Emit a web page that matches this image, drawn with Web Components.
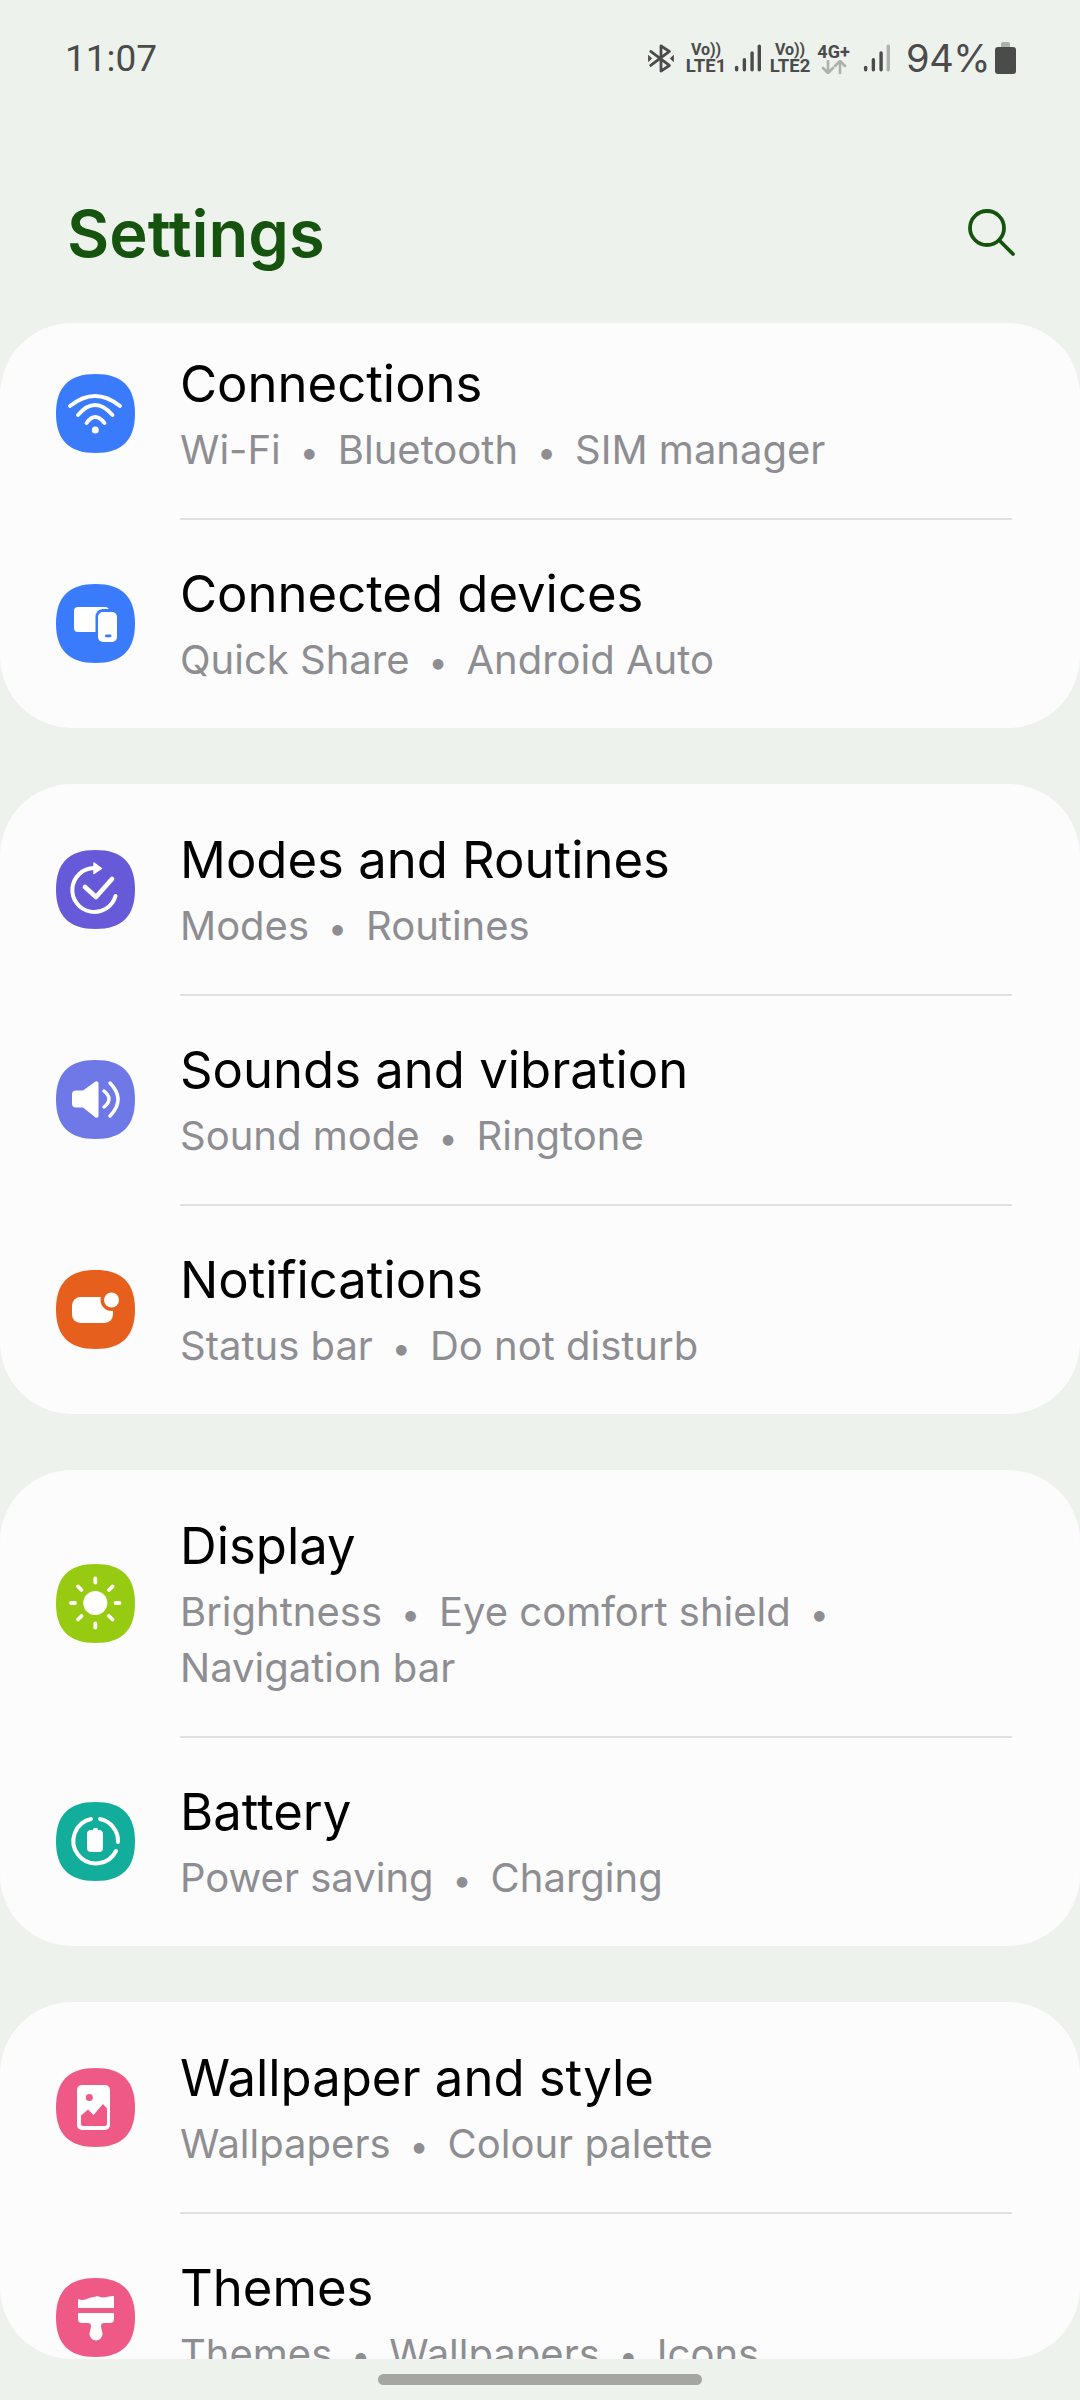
<!DOCTYPE html>
<html>
<head>
<meta charset="utf-8">
<title>Settings</title>
<style>
  html, body { margin: 0; padding: 0; background: #edf2ec; }
  body { width: 1080px; height: 2400px; overflow: hidden; font-family: Inter, Roboto, sans-serif; }
</style>
</head>
<body>
<settings-screen>
  <status-bar></status-bar>
  <settings-header></settings-header>
  <settings-list>
    <settings-card>
      <settings-row clipped label="Connections" sub="Wi-Fi|Bluetooth|SIM manager" icon="wifi" color="#3a7bfb"></settings-row>
      <settings-row label="Connected devices" sub="Quick Share|Android Auto" icon="devices" color="#3a7bfb"></settings-row>
    </settings-card>
    <settings-card>
      <settings-row label="Modes and Routines" sub="Modes|Routines" icon="modes" color="#675ad9"></settings-row>
      <settings-row label="Sounds and vibration" sub="Sound mode|Ringtone" icon="sound" color="#6e78e6"></settings-row>
      <settings-row label="Notifications" sub="Status bar|Do not disturb" icon="notif" color="#e75f1c"></settings-row>
    </settings-card>
    <settings-card>
      <settings-row label="Display" sub="Brightness|Eye comfort shield|Navigation bar" icon="display" color="#97cb12"></settings-row>
      <settings-row label="Battery" sub="Power saving|Charging" icon="battery" color="#13ad9c"></settings-row>
    </settings-card>
    <settings-card>
      <settings-row label="Wallpaper and style" sub="Wallpapers|Colour palette" icon="wallpaper" color="#ee5a85"></settings-row>
      <settings-row label="Themes" sub="Themes|Wallpapers|Icons" icon="themes" color="#ee5a85"></settings-row>
    </settings-card>
  </settings-list>
  <nav-pill></nav-pill>
</settings-screen>

<script>
const GLYPHS = {
  wifi: `<g fill="none" stroke="#fff" stroke-width="3.800" stroke-linecap="round">
      <path d="M14 32Q39 12 64 32"/><path d="M22 41Q39 21 56.500 41"/><path d="M30.500 49Q39 37 48.500 49"/></g>
      <circle cx="39.300" cy="56" r="3.500" fill="#fff"/>`,
  devices: `<rect x="18" y="23" width="35" height="25" rx="4" fill="#fff"/>
      <rect x="39.500" y="25" width="24" height="35.500" rx="7.500" fill="#3a7bfb"/>
      <rect x="42" y="28" width="19" height="30" rx="5" fill="#fff"/>
      <rect x="49" y="50.500" width="6.500" height="2.800" rx="1.400" fill="#3a7bfb"/>`,
  modes: `<g fill="none" stroke="#fff" stroke-linecap="round" stroke-linejoin="round">
      <path d="M38 18A22 22 0 1 0 59.500 46" stroke-width="4"/>
      <path d="M29 37l11 10 16-18" stroke-width="4.600"/></g>
      <path d="M38 13l7.500 5.500L38 23.500z" fill="#fff" stroke="#fff" stroke-width="1.500" stroke-linejoin="round"/>`,
  sound: `<path d="M20 30.500h7L39.500 21.500a2 2 0 0 1 3 1.500V56a2 2 0 0 1-3 1.500L27 47.500h-7a4 4 0 0 1-4-4V34.500a4 4 0 0 1 4-4z" fill="#fff"/>
      <g fill="none" stroke="#fff" stroke-width="3.500" stroke-linecap="round"><path d="M48 31Q58 39 48 47"/><path d="M54 23Q70 39.500 54 56"/></g>`,
  notif: `<rect x="16" y="27" width="41" height="26" rx="8.500" fill="#fff"/>
      <circle cx="55.500" cy="30" r="11" fill="#e75f1c"/>
      <circle cx="55.500" cy="30" r="7.500" fill="#fff"/>`,
  display: `<circle cx="39.300" cy="39" r="12" fill="#fff"/>
      <g stroke="#fff" stroke-width="3.800" stroke-linecap="round">
      <path d="M39.300 14.500v4"/><path d="M39.300 59.500v4"/><path d="M15 39h4"/><path d="M59.500 39h4"/>
      <path d="M22 22.500l3.500 3.500"/><path d="M53 52l3.500 3.500"/><path d="M22 55.500l3.500-3.500"/><path d="M53 26l3.500-3.500"/></g>`,
  battery: `<g fill="none" stroke="#fff" stroke-width="4" stroke-linecap="round">
      <path d="M44 17A22.500 22.500 0 0 1 62 40"/>
      <path d="M60 49A22.500 22.500 0 1 1 35 17"/></g>
      <path d="M37 28v-.5a1.500 1.500 0 0 1 1.500-1.500h2a1.500 1.500 0 0 1 1.500 1.500v.5h1a4 4 0 0 1 4 4v14a4 4 0 0 1-4 4h-8a4 4 0 0 1-4-4V32a4 4 0 0 1 4-4z" fill="#fff"/>`,
  wallpaper: `<rect x="21" y="17" width="33" height="45" rx="5" fill="#fff"/>
      <circle cx="33.300" cy="29.500" r="3.500" fill="#ee5a85"/>
      <path d="M25 47.500l7-6 5.500 5.500L47 36l4 4.500V56a2 2 0 0 1-2 2H27a2 2 0 0 1-2-2z" fill="#ee5a85"/>`,
  themes: `<path d="M22 21c4 1.500 7 1 10-.5 3-1.500 5-1 8-2 3-1 4 1 7 1 3 0 6-1.500 11-1.500v12H22z" fill="#fff"/>
      <path d="M22 35H58v6a4 4 0 0 1-4 4H48a3 3 0 0 0-3 3c0 3 1.500 5 1.500 8a6.500 6.500 0 0 1-13 0c0-3 1.500-5 1.500-8a3 3 0 0 0-3-3H26a4 4 0 0 1-4-4z" fill="#fff"/>`
};

class SettingsScreen extends HTMLElement {
  connectedCallback() {
    this.attachShadow({ mode: 'open' });
    this.shadowRoot.innerHTML = `
      <style>
        :host { display: flex; flex-direction: column; width: 1080px; height: 2400px; position: relative; overflow: hidden; color: #000; }
      </style>
      <slot></slot>
    `;
  }
}

class StatusBar extends HTMLElement {
  connectedCallback() {
    this.attachShadow({ mode: 'open' });
    this.shadowRoot.innerHTML = `
      <style>
        :host { display: flex; align-items: center; justify-content: space-between; height: 32px; padding: 42px 64px 0 65px; color: #4b4b4b; }
        .time { font: 400 37px Roboto, sans-serif; }
        .icons { display: flex; align-items: center; }
        .duo { display: flex; flex-direction: column; align-items: center; font: 700 18.500px/16.500px Roboto, sans-serif; }
        .duo small { font-size: 16px; line-height: 16.500px; display: flex; align-items: center; }
        .pct { font: 400 38px Inter, sans-serif; letter-spacing: -.5px; margin-right: 5px; }
        svg { display: block; }
      </style>
      <span class="time">11:07</span>
      <div class="icons">
        <svg width="28" height="32" viewBox="0 0 30 32" style="margin-right:12px" fill="none" stroke="#4b4b4b" stroke-width="3" stroke-linecap="round" stroke-linejoin="round">
          <path d="M4 9l20 15-9 6V3l9 6L4 24"/>
          <path d="M2 13.500l3 3-3 3zM28 13.500l-3 3 3 3z" fill="#4b4b4b" stroke-width="1"/>
        </svg>
        <div class="duo" style="width:38px;margin-right:9px"><small>Vo))</small>LTE1</div>
        <svg width="27" height="30" viewBox="0 0 28 30" style="margin-right:9px" fill="#4b4b4b">
          <rect x="1" y="23" width="3.500" height="6" rx="1.700"/><rect x="9" y="15" width="3.500" height="14" rx="1.700"/><rect x="17" y="8" width="3.500" height="21" rx="1.700"/><rect x="24.500" y="1" width="3.500" height="28" rx="1.700"/>
        </svg>
        <div class="duo" style="width:40px;margin-right:7px"><small>Vo))</small>LTE2</div>
        <div class="duo" style="width:33px;margin-right:13px">
          <span style="font-size:18px;line-height:17px">4G+</span>
          <svg width="26" height="14" viewBox="0 0 26 14" fill="none" stroke="#adb0ac" stroke-width="2.600" stroke-linecap="round" stroke-linejoin="round">
            <path d="M7 1v12M2 8l5 5 5-5"/><path d="M19 13V1M14 6l5-5 5 5"/>
          </svg>
        </div>
        <svg width="27" height="30" viewBox="0 0 28 30" style="margin-right:16px" fill="#4b4b4b">
          <rect x="1" y="23" width="3.500" height="6" rx="1.700"/><rect x="9" y="15" width="3.500" height="14" rx="1.700"/><rect x="17" y="8" width="3.500" height="21" rx="1.700"/><rect x="24.500" y="1" width="3.500" height="28" rx="1.700" fill="#adb0ac"/>
        </svg>
        <span class="pct">94%</span>
        <svg width="21" height="32" viewBox="0 0 21 32">
          <path d="M6 2a2 2 0 0 1 2-2h5a2 2 0 0 1 2 2v3H6z" fill="#adb0ac"/>
          <rect x="0" y="5" width="21" height="27" rx="3" fill="#4b4b4b"/>
        </svg>
      </div>
    `;
  }
}

class SettingsHeader extends HTMLElement {
  connectedCallback() {
    this.attachShadow({ mode: 'open' });
    this.shadowRoot.innerHTML = `
      <style>
        :host { display: flex; align-items: center; justify-content: space-between; height: 249px; padding: 70px 64px 0 67px; box-sizing: border-box; }
        h1 { margin: 0; font: 600 65px Inter, Roboto, sans-serif; color: #15530f; }
        svg { display: block; margin-top: -4px; }
      </style>
      <h1>Settings</h1>
      <svg width="50" height="50" viewBox="0 0 50 50" fill="none" stroke="#15530f" stroke-width="3.800" stroke-linecap="round">
        <circle cx="21" cy="21" r="17"/><path d="M33.500 33.500l13.500 13.500"/>
      </svg>
    `;
  }
}

class SettingsList extends HTMLElement {
  connectedCallback() {
    this.attachShadow({ mode: 'open' });
    this.shadowRoot.innerHTML = `
      <style>
        :host { display: flex; flex-direction: column; gap: 56px; }
      </style>
      <slot></slot>
    `;
  }
}

class SettingsCard extends HTMLElement {
  connectedCallback() {
    this.attachShadow({ mode: 'open' });
    this.shadowRoot.innerHTML = `
      <style>
        :host { display: block; background: #fcfcfc; border-radius: 72px; overflow: hidden; }
        :host(:last-child) { height: 357px; }
      </style>
      <slot></slot>
    `;
  }
}

class SettingsRow extends HTMLElement {
  connectedCallback() {
    const subs = this.getAttribute('sub').split('|');
    const color = this.getAttribute('color');
    const glyph = GLYPHS[this.getAttribute('icon')];
    const subHtml = subs.map((s, i) =>
      `<span class="item">${s}</span>` + (i < subs.length - 1 ? '<span class="dot">•</span>' : '')
    ).join('');
    this.attachShadow({ mode: 'open' });
    this.shadowRoot.innerHTML = `
      <style>
        :host { display: flex; align-items: center; padding: 0 68px 0 56px; }
        .icon { flex: none; width: 79px; height: 79px; margin-right: 45px; }
        :host([clipped]) .icon { margin-bottom: 14px; }
        .icon svg { display: block; }
        .body { flex: 1; padding: 44px 0 40px; border-top: 2px solid #dfdfdf; min-width: 0; }
        :host(:first-child) .body { border-top: 0; padding-top: 46px; }
        :host([clipped]) .body { padding-top: 31px; }
        .title { font-size: 50.800px; line-height: 60px; color: #000; }
        .sub { font-size: 40px; line-height: 56px; color: #8e8e92; margin-top: 8px; }
        .item { white-space: nowrap; }
        .dot { display: inline-block; width: 57px; text-align: center; font-size: 34px; line-height: 1; }
      </style>
      <div class="icon">
        <svg width="79" height="79" viewBox="0 0 79 79">
          <path d="M39.500 0C66 0 79 13 79 39.500S66 79 39.500 79 0 66 0 39.500 13 0 39.500 0z" fill="${color}"/>
          ${glyph}
        </svg>
      </div>
      <div class="body">
        <div class="title">${this.getAttribute('label')}</div>
        <div class="sub">${subHtml}</div>
      </div>
    `;
  }
}

class NavPill extends HTMLElement {
  connectedCallback() {
    this.attachShadow({ mode: 'open' });
    this.shadowRoot.innerHTML = `
      <style>
        :host { display: block; position: absolute; left: 378px; top: 2374px; width: 324px; height: 11px; border-radius: 6px; background: #a4a6a2; }
      </style>
    `;
  }
}

customElements.define('settings-screen', SettingsScreen);
customElements.define('status-bar', StatusBar);
customElements.define('settings-header', SettingsHeader);
customElements.define('settings-list', SettingsList);
customElements.define('settings-card', SettingsCard);
customElements.define('settings-row', SettingsRow);
customElements.define('nav-pill', NavPill);
</script>
</body>
</html>
